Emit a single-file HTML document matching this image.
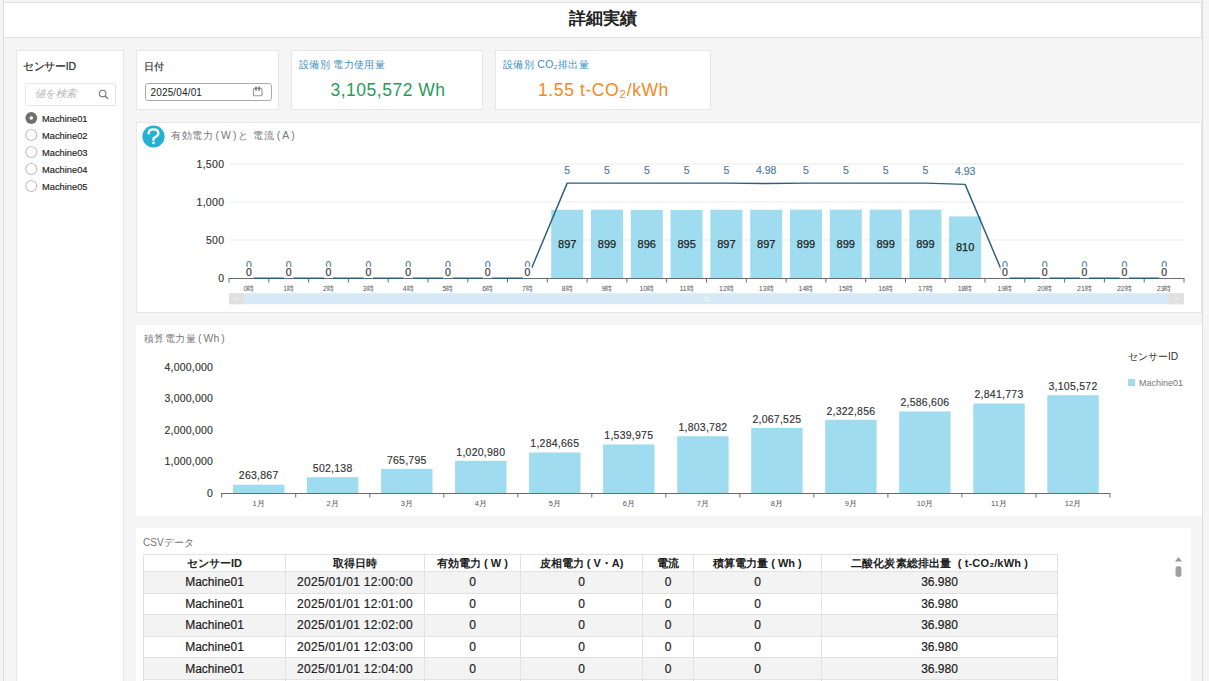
<!DOCTYPE html>
<html><head><meta charset="utf-8">
<style>
* { box-sizing:border-box; }
html,body { margin:0; padding:0; }
body { width:1209px; height:681px; overflow:hidden; position:relative; background:#f5f5f5; font-family:"Liberation Sans", sans-serif; color:#333; }
.abs { position:absolute; }
.panel { position:absolute; background:#fff; border:1px solid #e6e6e6; }
svg text { font-family:"Liberation Sans", sans-serif; }
table { border-collapse:collapse; position:absolute; left:143px; top:554px; table-layout:fixed; font-size:12px; color:#222; }
td, th { border:1px solid #e2e2e2; text-align:center; padding:0; white-space:nowrap; overflow:hidden; }
th { height:17px; font-weight:bold; font-size:11px; background:#fff; }
td { height:21.6px; -webkit-text-stroke:0.2px #222; }
</style></head><body>
<div class="abs" style="left:3px;top:0;width:1px;height:681px;background:#dcdcdc"></div>
<div class="abs" style="left:1202px;top:0;width:1px;height:681px;background:#dcdcdc"></div>
<div class="abs" style="left:4px;top:2px;width:1198px;height:36px;background:#fff;border:1px solid #e3e3e3;border-left:none"></div>
<div class="abs" style="left:4px;top:8px;width:1198px;text-align:center;font-size:17px;font-weight:bold;color:#222;line-height:22px">詳細実績</div>

<!-- sensor panel -->
<div class="panel" style="left:16px;top:50px;width:108px;height:640px"></div>
<div class="abs" style="left:22.8px;top:59.4px;font-size:10.5px;letter-spacing:-0.25px;line-height:14px;color:#222;-webkit-text-stroke:0.15px #222">センサーID</div>
<div class="abs" style="left:25px;top:83px;width:91px;height:22.5px;border:1px solid #e6e6e6;border-radius:2px;background:#fff"></div>
<div class="abs" style="left:35px;top:87px;font-size:10.4px;line-height:14px;color:#b5b5b5;font-style:italic">値を検索</div>
<svg class="abs" style="left:96px;top:87px" width="14" height="14"><circle cx="6.7" cy="6.6" r="3.3" fill="none" stroke="#777" stroke-width="1.1"/><line x1="9.1" y1="9" x2="12" y2="11.8" stroke="#777" stroke-width="1.2"/></svg>
<svg class="abs" style="left:24.5px;top:110.6px" width="14" height="14"><circle cx="6.3" cy="7" r="5.9" fill="#707070"/><circle cx="6.3" cy="7" r="1.7" fill="#fff"/></svg>
<div class="abs" style="left:42px;top:112.6px;font-size:9.3px;line-height:12px;color:#222;-webkit-text-stroke:0.15px #222">Machine01</div>
<svg class="abs" style="left:24.5px;top:127.8px" width="14" height="14"><circle cx="6.3" cy="7" r="5.5" fill="#fff" stroke="#c2c2c2" stroke-width="1.2"/></svg>
<div class="abs" style="left:42px;top:129.8px;font-size:9.3px;line-height:12px;color:#222;-webkit-text-stroke:0.15px #222">Machine02</div>
<svg class="abs" style="left:24.5px;top:145.0px" width="14" height="14"><circle cx="6.3" cy="7" r="5.5" fill="#fff" stroke="#c2c2c2" stroke-width="1.2"/></svg>
<div class="abs" style="left:42px;top:147.0px;font-size:9.3px;line-height:12px;color:#222;-webkit-text-stroke:0.15px #222">Machine03</div>
<svg class="abs" style="left:24.5px;top:162.2px" width="14" height="14"><circle cx="6.3" cy="7" r="5.5" fill="#fff" stroke="#c2c2c2" stroke-width="1.2"/></svg>
<div class="abs" style="left:42px;top:164.2px;font-size:9.3px;line-height:12px;color:#222;-webkit-text-stroke:0.15px #222">Machine04</div>
<svg class="abs" style="left:24.5px;top:179.4px" width="14" height="14"><circle cx="6.3" cy="7" r="5.5" fill="#fff" stroke="#c2c2c2" stroke-width="1.2"/></svg>
<div class="abs" style="left:42px;top:181.4px;font-size:9.3px;line-height:12px;color:#222;-webkit-text-stroke:0.15px #222">Machine05</div>


<!-- date panel -->
<div class="panel" style="left:136px;top:50px;width:143px;height:60px"></div>
<div class="abs" style="left:143.5px;top:60px;font-size:9.8px;line-height:14px;color:#222;-webkit-text-stroke:0.15px #222">日付</div>
<div class="abs" style="left:144.5px;top:82.5px;width:127px;height:18.5px;border:1.4px solid #acacac;border-radius:3px;background:#fff"></div>
<div class="abs" style="left:150.5px;top:86.5px;font-size:10px;line-height:12px;letter-spacing:0.15px;color:#222">2025/04/01</div>
<svg class="abs" style="left:252px;top:86px" width="12" height="11"><rect x="1.4" y="2.4" width="8.6" height="7.4" rx="1.3" fill="none" stroke="#9a9a9a" stroke-width="1.1"/><line x1="4" y1="1.2" x2="4" y2="4.2" stroke="#6f6f6f" stroke-width="1.5" stroke-linecap="round"/><line x1="7.1" y1="1.2" x2="7.1" y2="4.2" stroke="#6f6f6f" stroke-width="1.5" stroke-linecap="round"/></svg>

<!-- KPI 1 -->
<div class="panel" style="left:291px;top:50px;width:192px;height:60px"></div>
<div class="abs" style="left:299px;top:57.5px;font-size:10.4px;line-height:14px;letter-spacing:0.35px;color:#3b8ec5">設備別 電力使用量</div>
<div class="abs" style="left:292px;top:78.5px;width:192px;text-align:center;font-size:17.5px;line-height:22px;letter-spacing:0.5px;color:#2a9a5c">3,105,572 Wh</div>

<!-- KPI 2 -->
<div class="panel" style="left:495px;top:50px;width:216px;height:60px"></div>
<div class="abs" style="left:503px;top:57.5px;font-size:10.4px;line-height:14px;letter-spacing:0.35px;color:#3b8ec5">設備別 CO₂排出量</div>
<div class="abs" style="left:495.5px;top:78.5px;width:216px;text-align:center;font-size:17.5px;line-height:22px;letter-spacing:0.6px;color:#f5891f">1.55 t-CO₂/kWh</div>

<!-- chart 1 -->
<div class="panel" style="left:136px;top:122px;width:1066px;height:191px"></div>
<svg class="abs" style="left:142.3px;top:125px" width="23" height="23"><circle cx="11.5" cy="11.5" r="11.1" fill="#25b1d3"/><g transform="translate(11.5,11.5)"><path d="M -4.9,-3.1 C -4.9,-6 -2.8,-7.2 -0.1,-7.2 C 2.8,-7.2 4.9,-5.6 4.9,-3.1 C 4.9,-0.6 2.4,0 0,1.8 L 0,3.6" fill="none" stroke="#fff" stroke-width="2.3" stroke-linecap="round"/><circle cx="0" cy="6.3" r="1.4" fill="#fff"/></g></svg>
<div class="abs" style="left:171px;top:129px;font-size:10.4px;line-height:14px;color:#777"><span style="letter-spacing:0.6px">有効電力</span>&thinsp;(&thinsp;W&thinsp;)&thinsp;と&thinsp; <span style="letter-spacing:0.6px">電流</span>&thinsp;(&thinsp;A&thinsp;)</div>
<svg class="abs" style="left:0;top:0" width="1209" height="681">
<line x1="229.0" y1="240.0" x2="1184.0" y2="240.0" stroke="#ebebeb" stroke-width="1"/>
<line x1="229.0" y1="202.0" x2="1184.0" y2="202.0" stroke="#ebebeb" stroke-width="1"/>
<line x1="229.0" y1="164.0" x2="1184.0" y2="164.0" stroke="#ebebeb" stroke-width="1"/>
<rect x="551.2" y="209.8" width="32.0" height="68.2" fill="#9fdcef"/>
<rect x="591.0" y="209.7" width="32.0" height="68.3" fill="#9fdcef"/>
<rect x="630.8" y="209.9" width="32.0" height="68.1" fill="#9fdcef"/>
<rect x="670.6" y="210.0" width="32.0" height="68.0" fill="#9fdcef"/>
<rect x="710.4" y="209.8" width="32.0" height="68.2" fill="#9fdcef"/>
<rect x="750.2" y="209.8" width="32.0" height="68.2" fill="#9fdcef"/>
<rect x="790.0" y="209.7" width="32.0" height="68.3" fill="#9fdcef"/>
<rect x="829.8" y="209.7" width="32.0" height="68.3" fill="#9fdcef"/>
<rect x="869.6" y="209.7" width="32.0" height="68.3" fill="#9fdcef"/>
<rect x="909.4" y="209.7" width="32.0" height="68.3" fill="#9fdcef"/>
<rect x="949.1" y="216.4" width="32.0" height="61.6" fill="#9fdcef"/>
<line x1="229.0" y1="278.5" x2="1184.0" y2="278.5" stroke="#6a6a6a" stroke-width="1"/>
<line x1="229.0" y1="278.0" x2="229.0" y2="282.5" stroke="#6a6a6a" stroke-width="1"/>
<line x1="268.8" y1="278.0" x2="268.8" y2="282.5" stroke="#6a6a6a" stroke-width="1"/>
<line x1="308.6" y1="278.0" x2="308.6" y2="282.5" stroke="#6a6a6a" stroke-width="1"/>
<line x1="348.4" y1="278.0" x2="348.4" y2="282.5" stroke="#6a6a6a" stroke-width="1"/>
<line x1="388.2" y1="278.0" x2="388.2" y2="282.5" stroke="#6a6a6a" stroke-width="1"/>
<line x1="428.0" y1="278.0" x2="428.0" y2="282.5" stroke="#6a6a6a" stroke-width="1"/>
<line x1="467.8" y1="278.0" x2="467.8" y2="282.5" stroke="#6a6a6a" stroke-width="1"/>
<line x1="507.5" y1="278.0" x2="507.5" y2="282.5" stroke="#6a6a6a" stroke-width="1"/>
<line x1="547.3" y1="278.0" x2="547.3" y2="282.5" stroke="#6a6a6a" stroke-width="1"/>
<line x1="587.1" y1="278.0" x2="587.1" y2="282.5" stroke="#6a6a6a" stroke-width="1"/>
<line x1="626.9" y1="278.0" x2="626.9" y2="282.5" stroke="#6a6a6a" stroke-width="1"/>
<line x1="666.7" y1="278.0" x2="666.7" y2="282.5" stroke="#6a6a6a" stroke-width="1"/>
<line x1="706.5" y1="278.0" x2="706.5" y2="282.5" stroke="#6a6a6a" stroke-width="1"/>
<line x1="746.3" y1="278.0" x2="746.3" y2="282.5" stroke="#6a6a6a" stroke-width="1"/>
<line x1="786.1" y1="278.0" x2="786.1" y2="282.5" stroke="#6a6a6a" stroke-width="1"/>
<line x1="825.9" y1="278.0" x2="825.9" y2="282.5" stroke="#6a6a6a" stroke-width="1"/>
<line x1="865.7" y1="278.0" x2="865.7" y2="282.5" stroke="#6a6a6a" stroke-width="1"/>
<line x1="905.5" y1="278.0" x2="905.5" y2="282.5" stroke="#6a6a6a" stroke-width="1"/>
<line x1="945.2" y1="278.0" x2="945.2" y2="282.5" stroke="#6a6a6a" stroke-width="1"/>
<line x1="985.0" y1="278.0" x2="985.0" y2="282.5" stroke="#6a6a6a" stroke-width="1"/>
<line x1="1024.8" y1="278.0" x2="1024.8" y2="282.5" stroke="#6a6a6a" stroke-width="1"/>
<line x1="1064.6" y1="278.0" x2="1064.6" y2="282.5" stroke="#6a6a6a" stroke-width="1"/>
<line x1="1104.4" y1="278.0" x2="1104.4" y2="282.5" stroke="#6a6a6a" stroke-width="1"/>
<line x1="1144.2" y1="278.0" x2="1144.2" y2="282.5" stroke="#6a6a6a" stroke-width="1"/>
<line x1="1184.0" y1="278.0" x2="1184.0" y2="282.5" stroke="#6a6a6a" stroke-width="1"/>
<polyline points="248.9,278.3 288.7,278.3 328.5,278.3 368.3,278.3 408.1,278.3 447.9,278.3 487.6,278.3 527.4,278.3 567.2,183.1 607.0,183.1 646.8,183.1 686.6,183.1 726.4,183.1 766.2,183.5 806.0,183.1 845.8,183.1 885.6,183.1 925.4,183.1 965.1,184.4 1004.9,278.3 1044.7,278.3 1084.5,278.3 1124.3,278.3 1164.1,278.3" fill="none" stroke="#2d5f80" stroke-width="1.45" stroke-linejoin="round"/>
<text x="248.9" y="269.1" text-anchor="middle" font-size="10.5" fill="#55809f" stroke="#55809f" stroke-width="0.2">0</text>
<text x="288.7" y="269.1" text-anchor="middle" font-size="10.5" fill="#55809f" stroke="#55809f" stroke-width="0.2">0</text>
<text x="328.5" y="269.1" text-anchor="middle" font-size="10.5" fill="#55809f" stroke="#55809f" stroke-width="0.2">0</text>
<text x="368.3" y="269.1" text-anchor="middle" font-size="10.5" fill="#55809f" stroke="#55809f" stroke-width="0.2">0</text>
<text x="408.1" y="269.1" text-anchor="middle" font-size="10.5" fill="#55809f" stroke="#55809f" stroke-width="0.2">0</text>
<text x="447.9" y="269.1" text-anchor="middle" font-size="10.5" fill="#55809f" stroke="#55809f" stroke-width="0.2">0</text>
<text x="487.6" y="269.1" text-anchor="middle" font-size="10.5" fill="#55809f" stroke="#55809f" stroke-width="0.2">0</text>
<text x="527.4" y="269.1" text-anchor="middle" font-size="10.5" fill="#55809f" stroke="#55809f" stroke-width="0.2">0</text>
<text x="567.2" y="173.9" text-anchor="middle" font-size="10.5" fill="#55809f" stroke="#55809f" stroke-width="0.2">5</text>
<text x="607.0" y="173.9" text-anchor="middle" font-size="10.5" fill="#55809f" stroke="#55809f" stroke-width="0.2">5</text>
<text x="646.8" y="173.9" text-anchor="middle" font-size="10.5" fill="#55809f" stroke="#55809f" stroke-width="0.2">5</text>
<text x="686.6" y="173.9" text-anchor="middle" font-size="10.5" fill="#55809f" stroke="#55809f" stroke-width="0.2">5</text>
<text x="726.4" y="173.9" text-anchor="middle" font-size="10.5" fill="#55809f" stroke="#55809f" stroke-width="0.2">5</text>
<text x="766.2" y="174.3" text-anchor="middle" font-size="10.5" fill="#55809f" stroke="#55809f" stroke-width="0.2">4.98</text>
<text x="806.0" y="173.9" text-anchor="middle" font-size="10.5" fill="#55809f" stroke="#55809f" stroke-width="0.2">5</text>
<text x="845.8" y="173.9" text-anchor="middle" font-size="10.5" fill="#55809f" stroke="#55809f" stroke-width="0.2">5</text>
<text x="885.6" y="173.9" text-anchor="middle" font-size="10.5" fill="#55809f" stroke="#55809f" stroke-width="0.2">5</text>
<text x="925.4" y="173.9" text-anchor="middle" font-size="10.5" fill="#55809f" stroke="#55809f" stroke-width="0.2">5</text>
<text x="965.1" y="175.2" text-anchor="middle" font-size="10.5" fill="#55809f" stroke="#55809f" stroke-width="0.2">4.93</text>
<text x="1004.9" y="269.1" text-anchor="middle" font-size="10.5" fill="#55809f" stroke="#55809f" stroke-width="0.2">0</text>
<text x="1044.7" y="269.1" text-anchor="middle" font-size="10.5" fill="#55809f" stroke="#55809f" stroke-width="0.2">0</text>
<text x="1084.5" y="269.1" text-anchor="middle" font-size="10.5" fill="#55809f" stroke="#55809f" stroke-width="0.2">0</text>
<text x="1124.3" y="269.1" text-anchor="middle" font-size="10.5" fill="#55809f" stroke="#55809f" stroke-width="0.2">0</text>
<text x="1164.1" y="269.1" text-anchor="middle" font-size="10.5" fill="#55809f" stroke="#55809f" stroke-width="0.2">0</text>
<rect x="244.4" y="266.8" width="9" height="12.4" fill="#fff"/>
<line x1="244.4" y1="278.5" x2="253.4" y2="278.5" stroke="#6a6a6a" stroke-width="1"/>
<rect x="284.2" y="266.8" width="9" height="12.4" fill="#fff"/>
<line x1="284.2" y1="278.5" x2="293.2" y2="278.5" stroke="#6a6a6a" stroke-width="1"/>
<rect x="324.0" y="266.8" width="9" height="12.4" fill="#fff"/>
<line x1="324.0" y1="278.5" x2="333.0" y2="278.5" stroke="#6a6a6a" stroke-width="1"/>
<rect x="363.8" y="266.8" width="9" height="12.4" fill="#fff"/>
<line x1="363.8" y1="278.5" x2="372.8" y2="278.5" stroke="#6a6a6a" stroke-width="1"/>
<rect x="403.6" y="266.8" width="9" height="12.4" fill="#fff"/>
<line x1="403.6" y1="278.5" x2="412.6" y2="278.5" stroke="#6a6a6a" stroke-width="1"/>
<rect x="443.4" y="266.8" width="9" height="12.4" fill="#fff"/>
<line x1="443.4" y1="278.5" x2="452.4" y2="278.5" stroke="#6a6a6a" stroke-width="1"/>
<rect x="483.1" y="266.8" width="9" height="12.4" fill="#fff"/>
<line x1="483.1" y1="278.5" x2="492.1" y2="278.5" stroke="#6a6a6a" stroke-width="1"/>
<rect x="522.9" y="266.8" width="9" height="12.4" fill="#fff"/>
<line x1="522.9" y1="278.5" x2="531.9" y2="278.5" stroke="#6a6a6a" stroke-width="1"/>
<rect x="1000.4" y="266.8" width="9" height="12.4" fill="#fff"/>
<line x1="1000.4" y1="278.5" x2="1009.4" y2="278.5" stroke="#6a6a6a" stroke-width="1"/>
<rect x="1040.2" y="266.8" width="9" height="12.4" fill="#fff"/>
<line x1="1040.2" y1="278.5" x2="1049.2" y2="278.5" stroke="#6a6a6a" stroke-width="1"/>
<rect x="1080.0" y="266.8" width="9" height="12.4" fill="#fff"/>
<line x1="1080.0" y1="278.5" x2="1089.0" y2="278.5" stroke="#6a6a6a" stroke-width="1"/>
<rect x="1119.8" y="266.8" width="9" height="12.4" fill="#fff"/>
<line x1="1119.8" y1="278.5" x2="1128.8" y2="278.5" stroke="#6a6a6a" stroke-width="1"/>
<rect x="1159.6" y="266.8" width="9" height="12.4" fill="#fff"/>
<line x1="1159.6" y1="278.5" x2="1168.6" y2="278.5" stroke="#6a6a6a" stroke-width="1"/>
<text x="248.9" y="275.8" text-anchor="middle" font-size="10.5" fill="#444" stroke="#444" stroke-width="0.25">0</text>
<text x="288.7" y="275.8" text-anchor="middle" font-size="10.5" fill="#444" stroke="#444" stroke-width="0.25">0</text>
<text x="328.5" y="275.8" text-anchor="middle" font-size="10.5" fill="#444" stroke="#444" stroke-width="0.25">0</text>
<text x="368.3" y="275.8" text-anchor="middle" font-size="10.5" fill="#444" stroke="#444" stroke-width="0.25">0</text>
<text x="408.1" y="275.8" text-anchor="middle" font-size="10.5" fill="#444" stroke="#444" stroke-width="0.25">0</text>
<text x="447.9" y="275.8" text-anchor="middle" font-size="10.5" fill="#444" stroke="#444" stroke-width="0.25">0</text>
<text x="487.6" y="275.8" text-anchor="middle" font-size="10.5" fill="#444" stroke="#444" stroke-width="0.25">0</text>
<text x="527.4" y="275.8" text-anchor="middle" font-size="10.5" fill="#444" stroke="#444" stroke-width="0.25">0</text>
<text x="567.2" y="248.1" text-anchor="middle" font-size="11" fill="#222" stroke="#222" stroke-width="0.25">897</text>
<text x="607.0" y="248.0" text-anchor="middle" font-size="11" fill="#222" stroke="#222" stroke-width="0.25">899</text>
<text x="646.8" y="248.2" text-anchor="middle" font-size="11" fill="#222" stroke="#222" stroke-width="0.25">896</text>
<text x="686.6" y="248.2" text-anchor="middle" font-size="11" fill="#222" stroke="#222" stroke-width="0.25">895</text>
<text x="726.4" y="248.1" text-anchor="middle" font-size="11" fill="#222" stroke="#222" stroke-width="0.25">897</text>
<text x="766.2" y="248.1" text-anchor="middle" font-size="11" fill="#222" stroke="#222" stroke-width="0.25">897</text>
<text x="806.0" y="248.0" text-anchor="middle" font-size="11" fill="#222" stroke="#222" stroke-width="0.25">899</text>
<text x="845.8" y="248.0" text-anchor="middle" font-size="11" fill="#222" stroke="#222" stroke-width="0.25">899</text>
<text x="885.6" y="248.0" text-anchor="middle" font-size="11" fill="#222" stroke="#222" stroke-width="0.25">899</text>
<text x="925.4" y="248.0" text-anchor="middle" font-size="11" fill="#222" stroke="#222" stroke-width="0.25">899</text>
<text x="965.1" y="251.4" text-anchor="middle" font-size="11" fill="#222" stroke="#222" stroke-width="0.25">810</text>
<text x="1004.9" y="275.8" text-anchor="middle" font-size="10.5" fill="#444" stroke="#444" stroke-width="0.25">0</text>
<text x="1044.7" y="275.8" text-anchor="middle" font-size="10.5" fill="#444" stroke="#444" stroke-width="0.25">0</text>
<text x="1084.5" y="275.8" text-anchor="middle" font-size="10.5" fill="#444" stroke="#444" stroke-width="0.25">0</text>
<text x="1124.3" y="275.8" text-anchor="middle" font-size="10.5" fill="#444" stroke="#444" stroke-width="0.25">0</text>
<text x="1164.1" y="275.8" text-anchor="middle" font-size="10.5" fill="#444" stroke="#444" stroke-width="0.25">0</text>
<text x="248.9" y="290.8" text-anchor="middle" font-size="7" fill="#555">0時</text>
<text x="288.7" y="290.8" text-anchor="middle" font-size="7" fill="#555">1時</text>
<text x="328.5" y="290.8" text-anchor="middle" font-size="7" fill="#555">2時</text>
<text x="368.3" y="290.8" text-anchor="middle" font-size="7" fill="#555">3時</text>
<text x="408.1" y="290.8" text-anchor="middle" font-size="7" fill="#555">4時</text>
<text x="447.9" y="290.8" text-anchor="middle" font-size="7" fill="#555">5時</text>
<text x="487.6" y="290.8" text-anchor="middle" font-size="7" fill="#555">6時</text>
<text x="527.4" y="290.8" text-anchor="middle" font-size="7" fill="#555">7時</text>
<text x="567.2" y="290.8" text-anchor="middle" font-size="7" fill="#555">8時</text>
<text x="607.0" y="290.8" text-anchor="middle" font-size="7" fill="#555">9時</text>
<text x="646.8" y="290.8" text-anchor="middle" font-size="7" fill="#555">10時</text>
<text x="686.6" y="290.8" text-anchor="middle" font-size="7" fill="#555">11時</text>
<text x="726.4" y="290.8" text-anchor="middle" font-size="7" fill="#555">12時</text>
<text x="766.2" y="290.8" text-anchor="middle" font-size="7" fill="#555">13時</text>
<text x="806.0" y="290.8" text-anchor="middle" font-size="7" fill="#555">14時</text>
<text x="845.8" y="290.8" text-anchor="middle" font-size="7" fill="#555">15時</text>
<text x="885.6" y="290.8" text-anchor="middle" font-size="7" fill="#555">16時</text>
<text x="925.4" y="290.8" text-anchor="middle" font-size="7" fill="#555">17時</text>
<text x="965.1" y="290.8" text-anchor="middle" font-size="7" fill="#555">18時</text>
<text x="1004.9" y="290.8" text-anchor="middle" font-size="7" fill="#555">19時</text>
<text x="1044.7" y="290.8" text-anchor="middle" font-size="7" fill="#555">20時</text>
<text x="1084.5" y="290.8" text-anchor="middle" font-size="7" fill="#555">21時</text>
<text x="1124.3" y="290.8" text-anchor="middle" font-size="7" fill="#555">22時</text>
<text x="1164.1" y="290.8" text-anchor="middle" font-size="7" fill="#555">23時</text>
<text x="224.3" y="281.8" text-anchor="end" font-size="10.5" letter-spacing="0.3" fill="#333" stroke="#333" stroke-width="0.15">0</text>
<text x="224.3" y="243.8" text-anchor="end" font-size="10.5" letter-spacing="0.3" fill="#333" stroke="#333" stroke-width="0.15">500</text>
<text x="224.3" y="205.8" text-anchor="end" font-size="10.5" letter-spacing="0.3" fill="#333" stroke="#333" stroke-width="0.15">1,000</text>
<text x="224.3" y="167.8" text-anchor="end" font-size="10.5" letter-spacing="0.3" fill="#333" stroke="#333" stroke-width="0.15">1,500</text>
<rect x="229.0" y="293.2" width="955.0" height="11" fill="#d5eaf6"/>
<rect x="229.0" y="293.2" width="15" height="11" fill="#e0e0e0"/>
<rect x="1169.0" y="293.2" width="15" height="11" fill="#e0e0e0"/>
<line x1="234.0" y1="298.7" x2="239.0" y2="298.7" stroke="#f4f4f4" stroke-width="1"/>
<line x1="1174.0" y1="298.7" x2="1179.0" y2="298.7" stroke="#f4f4f4" stroke-width="1"/>
<line x1="704" y1="297.5" x2="709" y2="297.5" stroke="#eef7fc" stroke-width="1"/>
<line x1="704" y1="300.5" x2="709" y2="300.5" stroke="#eef7fc" stroke-width="1"/>
</svg>

<!-- chart 2 -->
<div class="abs" style="left:136px;top:325px;width:1066px;height:191px;background:#fff"></div>
<div class="abs" style="left:143.5px;top:332.3px;font-size:10.4px;line-height:14px;color:#777"><span style="letter-spacing:0.5px">積算電力量</span>&thinsp;(&thinsp;Wh&thinsp;)</div>
<div class="abs" style="left:1128px;top:350px;font-size:10.2px;line-height:14px;color:#333">センサーID</div>
<div class="abs" style="left:1128px;top:379px;width:7px;height:7px;background:#9fdcef"></div>
<div class="abs" style="left:1139px;top:377px;font-size:9px;line-height:12px;color:#777">Machine01</div>
<svg class="abs" style="left:0;top:0" width="1209" height="681">
<rect x="233.0" y="484.7" width="51.4" height="8.3" fill="#9fdcef"/>
<text x="258.7" y="479.4" text-anchor="middle" font-size="10.5" letter-spacing="0.25" fill="#333" stroke="#333" stroke-width="0.15">263,867</text>
<text x="258.7" y="505.5" text-anchor="middle" font-size="7.5" fill="#555">1月</text>
<rect x="307.0" y="477.2" width="51.4" height="15.8" fill="#9fdcef"/>
<text x="332.7" y="471.9" text-anchor="middle" font-size="10.5" letter-spacing="0.25" fill="#333" stroke="#333" stroke-width="0.15">502,138</text>
<text x="332.7" y="505.5" text-anchor="middle" font-size="7.5" fill="#555">2月</text>
<rect x="381.1" y="468.9" width="51.4" height="24.1" fill="#9fdcef"/>
<text x="406.8" y="463.6" text-anchor="middle" font-size="10.5" letter-spacing="0.25" fill="#333" stroke="#333" stroke-width="0.15">765,795</text>
<text x="406.8" y="505.5" text-anchor="middle" font-size="7.5" fill="#555">3月</text>
<rect x="455.1" y="460.8" width="51.4" height="32.2" fill="#9fdcef"/>
<text x="480.8" y="455.5" text-anchor="middle" font-size="10.5" letter-spacing="0.25" fill="#333" stroke="#333" stroke-width="0.15">1,020,980</text>
<text x="480.8" y="505.5" text-anchor="middle" font-size="7.5" fill="#555">4月</text>
<rect x="529.1" y="452.5" width="51.4" height="40.5" fill="#9fdcef"/>
<text x="554.8" y="447.2" text-anchor="middle" font-size="10.5" letter-spacing="0.25" fill="#333" stroke="#333" stroke-width="0.15">1,284,665</text>
<text x="554.8" y="505.5" text-anchor="middle" font-size="7.5" fill="#555">5月</text>
<rect x="603.1" y="444.5" width="51.4" height="48.5" fill="#9fdcef"/>
<text x="628.8" y="439.2" text-anchor="middle" font-size="10.5" letter-spacing="0.25" fill="#333" stroke="#333" stroke-width="0.15">1,539,975</text>
<text x="628.8" y="505.5" text-anchor="middle" font-size="7.5" fill="#555">6月</text>
<rect x="677.2" y="436.2" width="51.4" height="56.8" fill="#9fdcef"/>
<text x="702.9" y="430.9" text-anchor="middle" font-size="10.5" letter-spacing="0.25" fill="#333" stroke="#333" stroke-width="0.15">1,803,782</text>
<text x="702.9" y="505.5" text-anchor="middle" font-size="7.5" fill="#555">7月</text>
<rect x="751.2" y="427.9" width="51.4" height="65.1" fill="#9fdcef"/>
<text x="776.9" y="422.6" text-anchor="middle" font-size="10.5" letter-spacing="0.25" fill="#333" stroke="#333" stroke-width="0.15">2,067,525</text>
<text x="776.9" y="505.5" text-anchor="middle" font-size="7.5" fill="#555">8月</text>
<rect x="825.2" y="419.8" width="51.4" height="73.2" fill="#9fdcef"/>
<text x="850.9" y="414.5" text-anchor="middle" font-size="10.5" letter-spacing="0.25" fill="#333" stroke="#333" stroke-width="0.15">2,322,856</text>
<text x="850.9" y="505.5" text-anchor="middle" font-size="7.5" fill="#555">9月</text>
<rect x="899.2" y="411.5" width="51.4" height="81.5" fill="#9fdcef"/>
<text x="924.9" y="406.2" text-anchor="middle" font-size="10.5" letter-spacing="0.25" fill="#333" stroke="#333" stroke-width="0.15">2,586,606</text>
<text x="924.9" y="505.5" text-anchor="middle" font-size="7.5" fill="#555">10月</text>
<rect x="973.3" y="403.5" width="51.4" height="89.5" fill="#9fdcef"/>
<text x="999.0" y="398.2" text-anchor="middle" font-size="10.5" letter-spacing="0.25" fill="#333" stroke="#333" stroke-width="0.15">2,841,773</text>
<text x="999.0" y="505.5" text-anchor="middle" font-size="7.5" fill="#555">11月</text>
<rect x="1047.3" y="395.2" width="51.4" height="97.8" fill="#9fdcef"/>
<text x="1073.0" y="389.9" text-anchor="middle" font-size="10.5" letter-spacing="0.25" fill="#333" stroke="#333" stroke-width="0.15">3,105,572</text>
<text x="1073.0" y="505.5" text-anchor="middle" font-size="7.5" fill="#555">12月</text>
<line x1="221.7" y1="493.5" x2="1110.0" y2="493.5" stroke="#6a6a6a" stroke-width="1"/>
<line x1="221.7" y1="493.0" x2="221.7" y2="497.5" stroke="#6a6a6a" stroke-width="1"/>
<line x1="295.7" y1="493.0" x2="295.7" y2="497.5" stroke="#6a6a6a" stroke-width="1"/>
<line x1="369.8" y1="493.0" x2="369.8" y2="497.5" stroke="#6a6a6a" stroke-width="1"/>
<line x1="443.8" y1="493.0" x2="443.8" y2="497.5" stroke="#6a6a6a" stroke-width="1"/>
<line x1="517.8" y1="493.0" x2="517.8" y2="497.5" stroke="#6a6a6a" stroke-width="1"/>
<line x1="591.8" y1="493.0" x2="591.8" y2="497.5" stroke="#6a6a6a" stroke-width="1"/>
<line x1="665.8" y1="493.0" x2="665.8" y2="497.5" stroke="#6a6a6a" stroke-width="1"/>
<line x1="739.9" y1="493.0" x2="739.9" y2="497.5" stroke="#6a6a6a" stroke-width="1"/>
<line x1="813.9" y1="493.0" x2="813.9" y2="497.5" stroke="#6a6a6a" stroke-width="1"/>
<line x1="887.9" y1="493.0" x2="887.9" y2="497.5" stroke="#6a6a6a" stroke-width="1"/>
<line x1="961.9" y1="493.0" x2="961.9" y2="497.5" stroke="#6a6a6a" stroke-width="1"/>
<line x1="1036.0" y1="493.0" x2="1036.0" y2="497.5" stroke="#6a6a6a" stroke-width="1"/>
<line x1="1110.0" y1="493.0" x2="1110.0" y2="497.5" stroke="#6a6a6a" stroke-width="1"/>
<text x="213" y="496.8" text-anchor="end" font-size="10.5" letter-spacing="0.2" fill="#333" stroke="#333" stroke-width="0.15">0</text>
<text x="213" y="465.3" text-anchor="end" font-size="10.5" letter-spacing="0.2" fill="#333" stroke="#333" stroke-width="0.15">1,000,000</text>
<text x="213" y="433.8" text-anchor="end" font-size="10.5" letter-spacing="0.2" fill="#333" stroke="#333" stroke-width="0.15">2,000,000</text>
<text x="213" y="402.3" text-anchor="end" font-size="10.5" letter-spacing="0.2" fill="#333" stroke="#333" stroke-width="0.15">3,000,000</text>
<text x="213" y="370.8" text-anchor="end" font-size="10.5" letter-spacing="0.2" fill="#333" stroke="#333" stroke-width="0.15">4,000,000</text>
</svg>

<!-- CSV -->
<div class="abs" style="left:136px;top:528px;width:1055px;height:200px;background:#fff"></div>
<div class="abs" style="left:143px;top:536px;font-size:10px;line-height:14px;color:#777">CSVデータ</div>
<table>
<colgroup><col style="width:142px"><col style="width:139px"><col style="width:96px"><col style="width:122px"><col style="width:51px"><col style="width:128px"><col style="width:236px"></colgroup>
<tr><th>センサーID</th><th>取得日時</th><th>有効電力 ( W )</th><th>皮相電力 ( V・A)</th><th>電流</th><th>積算電力量 ( Wh )</th><th style="letter-spacing:0.15px">二酸化炭素総排出量&nbsp;&nbsp;( t-CO₂/kWh )</th></tr>
<tr style="background:#f3f3f3"><td>Machine01</td><td style="letter-spacing:0.3px">2025/01/01 12:00:00</td><td>0</td><td>0</td><td>0</td><td>0</td><td>36.980</td></tr>
<tr style="background:#fff"><td>Machine01</td><td style="letter-spacing:0.3px">2025/01/01 12:01:00</td><td>0</td><td>0</td><td>0</td><td>0</td><td>36.980</td></tr>
<tr style="background:#f3f3f3"><td>Machine01</td><td style="letter-spacing:0.3px">2025/01/01 12:02:00</td><td>0</td><td>0</td><td>0</td><td>0</td><td>36.980</td></tr>
<tr style="background:#fff"><td>Machine01</td><td style="letter-spacing:0.3px">2025/01/01 12:03:00</td><td>0</td><td>0</td><td>0</td><td>0</td><td>36.980</td></tr>
<tr style="background:#f3f3f3"><td>Machine01</td><td style="letter-spacing:0.3px">2025/01/01 12:04:00</td><td>0</td><td>0</td><td>0</td><td>0</td><td>36.980</td></tr>
<tr style="background:#fff"><td>Machine01</td><td style="letter-spacing:0.3px">2025/01/01 12:05:00</td><td>0</td><td>0</td><td>0</td><td>0</td><td>36.980</td></tr>

</table>
<svg class="abs" style="left:1174px;top:556px" width="9" height="23"><polygon points="1,5.5 4.5,1 8,5.5" fill="#999"/><rect x="1.5" y="10" width="6" height="11" rx="3" fill="#a0a0a0"/></svg>
</body></html>
